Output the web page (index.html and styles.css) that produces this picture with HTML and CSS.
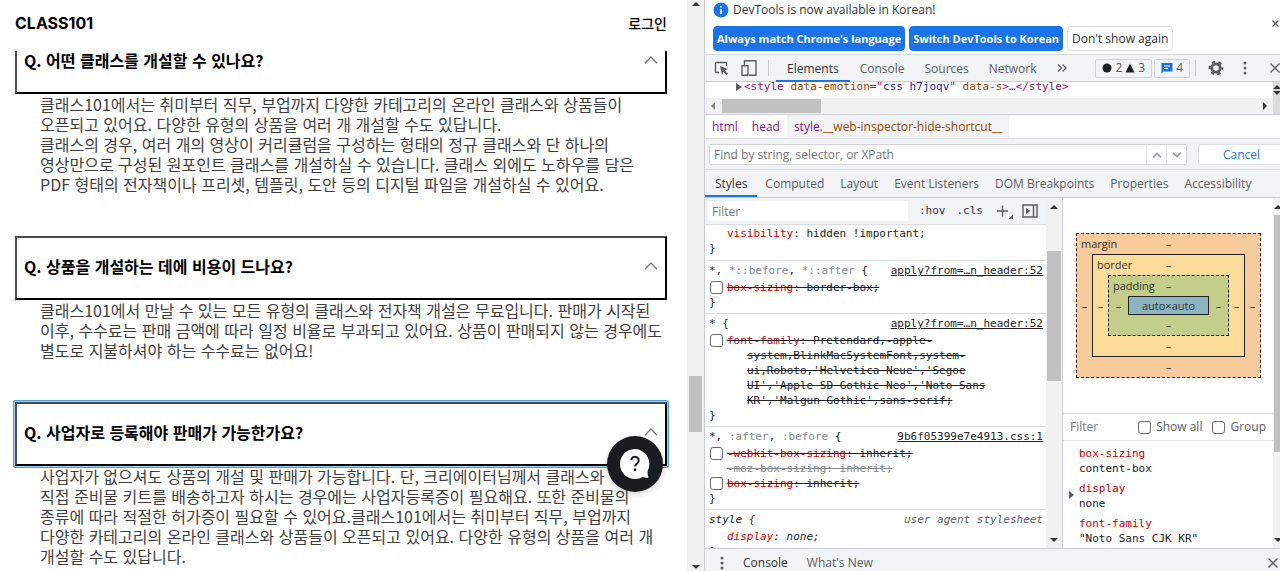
FILE: index.html
```html
<!DOCTYPE html>
<html lang="ko">
<head>
    <meta charset="UTF-8">
    <meta name="viewport" content="width=device-width, initial-scale=1.0">
    <title>CLASS101</title>
    <link rel="stylesheet" href="styles.css">
</head>
<body>

    <!-- Site -->
    <div class="site">
        <header class="site-header">
            <a class="logo" href="#">CLASS101</a>
            <a class="login" href="#">로그인</a>
        </header>

        <main class="faq">
            <div class="faq-list">
                <section class="faq-item">
                    <button class="question">Q. 어떤 클래스를 개설할 수 있나요?
                        <svg class="chevron" viewBox="0 0 14 8"><path d="M1 7.2 7 1l6 6.2"/></svg>
                    </button>
                    <p class="answer">클래스101에서는 취미부터 직무, 부업까지 다양한 카테고리의 온라인 클래스와 상품들이<br>오픈되고 있어요. 다양한 유형의 상품을 여러 개 개설할 수도 있답니다.<br>클래스의 경우, 여러 개의 영상이 커리큘럼을 구성하는 형태의 정규 클래스와 단 하나의<br>영상만으로 구성된 원포인트 클래스를 개설하실 수 있습니다. 클래스 외에도 노하우를 담은<br>PDF 형태의 전자책이나 프리셋, 템플릿, 도안 등의 디지털 파일을 개설하실 수 있어요.</p>
                </section>
                <section class="faq-item">
                    <button class="question">Q. 상품을 개설하는 데에 비용이 드나요?
                        <svg class="chevron" viewBox="0 0 14 8"><path d="M1 7.2 7 1l6 6.2"/></svg>
                    </button>
                    <p class="answer">클래스101에서 만날 수 있는 모든 유형의 클래스와 전자책 개설은 무료입니다. 판매가 시작된<br>이후, 수수료는 판매 금액에 따라 일정 비율로 부과되고 있어요. 상품이 판매되지 않는 경우에도<br>별도로 지불하셔야 하는 수수료는 없어요!</p>
                </section>
                <section class="faq-item">
                    <button class="question focused">Q. 사업자로 등록해야 판매가 가능한가요?
                        <svg class="chevron" viewBox="0 0 14 8"><path d="M1 7.2 7 1l6 6.2"/></svg>
                    </button>
                    <p class="answer">사업자가 없으셔도 상품의 개설 및 판매가 가능합니다. 단, 크리에이터님께서 클래스와<br>직접 준비물 키트를 배송하고자 하시는 경우에는 사업자등록증이 필요해요. 또한 준비물의<br>종류에 따라 적절한 허가증이 필요할 수 있어요.클래스101에서는 취미부터 직무, 부업까지<br>다양한 카테고리의 온라인 클래스와 상품들이 오픈되고 있어요. 다양한 유형의 상품을 여러 개<br>개설할 수도 있답니다.</p>
                </section>
            </div>
        </main>

        <button class="chat" aria-label="문의하기">
            <svg viewBox="0 0 30 30">
                <path class="bubble" d="M15 0a15 15 0 1 0 7.600 27.900c1.800.8 3.900 1 6 .6-.9-1.800-1.200-4-.9-6.600A15 15 0 0 0 15 0z"/>
                <path class="mark" d="M11.300 11.300a3.700 3.700 0 1 1 5.900 3.100c-1.500 1-2.200 1.600-2.200 3.200"/>
                <circle cx="15" cy="20.800" r="1.300"/>
            </svg>
        </button>
    </div>

    <div class="scroll site-scroll">
        <span class="arrow up"></span>
        <span class="thumb"></span>
        <span class="arrow down"></span>
    </div>

    <!-- DevTools -->
    <div class="devtools">
        <div class="infobar">
            <div class="infobar-text">
                <svg class="info" viewBox="0 0 16 16"><circle cx="8" cy="8" r="7.500" fill="#1a73e8"/><path d="M8 7v5M8 4v1.600" stroke="#fff" stroke-width="1.600"/></svg>
                <span>DevTools is now available in Korean!</span>
            </div>
            <div class="infobar-buttons">
                <button class="btn primary">Always match Chrome's language</button>
                <button class="btn primary">Switch DevTools to Korean</button>
                <button class="btn">Don't show again</button>
            </div>
            <button class="icon-btn infobar-close" aria-label="Close">
                <svg width="7" height="7" viewBox="0 0 7 7"><path d="M.5.500l6 6M6.500.500l-6 6"/></svg>
            </button>
        </div>

        <nav class="toolbar">
            <button class="icon-btn inspect" aria-label="Inspect">
                <svg width="16" height="16" viewBox="0 0 16 16"><path d="M5 12.500H2.500a1 1 0 0 1-1-1v-8a1 1 0 0 1 1-1h9a1 1 0 0 1 1 1V6"/><path class="fill" d="M6 6l8 3-3.200 1.500 3.200 3.200-1.300 1.300-3.200-3.200L8 15z"/></svg>
            </button>
            <button class="icon-btn device" aria-label="Device">
                <svg width="16" height="18" viewBox="0 0 16 18"><path d="M3.500 6V1.700h11.500v14.600H8M1 6.700h6v9.600H1z"/></svg>
            </button>
            <span class="divider"></span>
            <a class="tab active" href="#">Elements</a>
            <a class="tab" href="#">Console</a>
            <a class="tab" href="#">Sources</a>
            <a class="tab" href="#">Network</a>
            <button class="icon-btn more" aria-label="More tabs">
                <svg width="10" height="8" viewBox="0 0 10 8"><path d="M1 .500 4.500 4 1 7.500M5.500.500 9 4 5.500 7.500"/></svg>
            </button>
            <button class="counter">
                <svg width="10" height="10" viewBox="0 0 10 10"><circle cx="5" cy="5" r="4.500"/></svg>2
                <svg width="10" height="10" viewBox="0 0 10 10"><path d="M5 .500 9.500 9.500H.500z"/></svg>3
            </button>
            <button class="counter issues">
                <svg width="12" height="12" viewBox="0 0 12 12"><path fill="#1a73e8" d="M.500 1h11v8.500h-9L.500 11.500z"/><path d="M3 4h6M3 6.500h4" stroke="#fff"/></svg>4
            </button>
            <span class="divider"></span>
            <button class="icon-btn gear" aria-label="Settings">
                <svg width="16" height="16" viewBox="0 0 16 16"><circle cx="8" cy="8" r="4.200" stroke-width="2.800"/><circle cx="8" cy="8" r="6.300" stroke-width="2.200" stroke-dasharray="3.300 3.297" stroke-dashoffset="1.600"/></svg>
            </button>
            <button class="icon-btn dots" aria-label="Menu">
                <svg width="4" height="14" viewBox="0 0 4 14"><g class="fill"><circle cx="2" cy="2" r="1.500"/><circle cx="2" cy="7" r="1.500"/><circle cx="2" cy="12" r="1.500"/></g></svg>
            </button>
            <button class="icon-btn close" aria-label="Close DevTools">
                <svg width="10" height="10" viewBox="0 0 10 10"><path d="M.500.500l9 9M9.500.500l-9 9"/></svg>
            </button>
        </nav>

        <div class="dom">
            <div class="dom-line"><span class="tri"></span><code><span class="tag">&lt;style</span> <span class="attr">data-emotion</span><span class="tag">="</span><span class="val">css h7joqv</span><span class="tag">"</span> <span class="attr">data-s</span><span class="tag">&gt;</span>…<span class="tag">&lt;/style&gt;</span></code></div>
            <div class="dom-corner"><span class="arrow up"></span><span class="arrow down"></span></div>
            <div class="hscroll">
                <span class="arrow left"></span>
                <span class="hthumb"></span>
                <span class="arrow right"></span>
            </div>
        </div>

        <div class="crumbs">
            <a href="#">html</a>
            <a href="#">head</a>
            <a class="selected" href="#">style<span class="attr">.__web-inspector-hide-shortcut__</span></a>
        </div>

        <div class="search">
            <div class="search-box">
                <input type="text" aria-label="Find" placeholder="Find by string, selector, or XPath">
                <button aria-label="Previous"><svg width="10" height="6" viewBox="0 0 10 6"><path d="M1 5.500 5 1.500l4 4"/></svg></button>
                <button aria-label="Next"><svg width="10" height="6" viewBox="0 0 10 6"><path d="M1 .500 5 4.500l4-4"/></svg></button>
            </div>
            <button class="cancel">Cancel</button>
        </div>

        <nav class="subtabs">
            <a class="active" href="#">Styles</a>
            <a href="#">Computed</a>
            <a href="#">Layout</a>
            <a href="#">Event Listeners</a>
            <a href="#">DOM Breakpoints</a>
            <a href="#">Properties</a>
            <a href="#">Accessibility</a>
        </nav>

        <div class="panes">
            <div class="styles">
                <div class="filterbar">
                    <input type="text" aria-label="Filter styles" placeholder="Filter">
                    <button class="toggle">:hov</button>
                    <button class="toggle">.cls</button>
                    <button class="icon-btn plus" aria-label="New rule">
                        <svg width="18" height="18" viewBox="0 0 18 18"><path d="M1 9h11M6.500 3.500v11"/><path class="fill" d="M17 12.500V17h-4.500z"/></svg>
                    </button>
                    <button class="icon-btn" aria-label="Sidebar">
                        <svg width="16" height="14" viewBox="0 0 16 14"><path d="M1 1h14v12H1zM11.500 1v12"/><path class="fill" d="M4 4l4.500 3L4 10z"/></svg>
                    </button>
                </div>
                <div class="rules">
                    <div class="rule first">
                        <div class="decl"><b>visibility</b>: hidden !important;</div>
                        <div>}</div>
                    </div>
                    <div class="rule">
                        <div class="selector"><span>*, <i>*::before</i>, <i>*::after</i> {</span><a href="#">apply?from=…n_header:52</a></div>
                        <label class="decl"><input type="checkbox"><s><b>box-sizing</b>: border-box;</s></label>
                        <div>}</div>
                    </div>
                    <div class="rule">
                        <div class="selector"><span>* {</span><a href="#">apply?from=…n_header:52</a></div>
                        <label class="decl long"><input type="checkbox"><s><b>font-family</b>: Pretendard,-apple-<br>system,BlinkMacSystemFont,system-<br>ui,Roboto,'Helvetica Neue','Segoe<br>UI','Apple SD Gothic Neo','Noto Sans<br>KR','Malgun Gothic',sans-serif;</s></label>
                        <div>}</div>
                    </div>
                    <div class="rule">
                        <div class="selector"><span>*, <i>:after</i>, <i>:before</i> {</span><a href="#">9b6f05399e7e4913.css:1</a></div>
                        <label class="decl"><input type="checkbox"><s><b>-webkit-box-sizing</b>: inherit;</s></label>
                        <div class="decl muted"><s>-moz-box-sizing: inherit;</s></div>
                        <label class="decl"><input type="checkbox"><s><b>box-sizing</b>: inherit;</s></label>
                        <div>}</div>
                    </div>
                    <div class="rule agent">
                        <div class="selector"><span>style {</span><span class="origin">user agent stylesheet</span></div>
                        <div class="decl"><b>display</b>: none;</div>
                        <div>}</div>
                    </div>
                </div>
            </div>
            <div class="scroll styles-scroll">
                <span class="arrow up"></span>
                <span class="thumb"></span>
                <span class="arrow down"></span>
            </div>

            <div class="side">
                <div class="model">
                    <div class="ring margin">
                        <span class="name">margin</span><span class="t">–</span><span class="l">–</span>
                        <div class="ring border">
                            <span class="name">border</span><span class="t">–</span><span class="l">–</span>
                            <div class="ring padding">
                                <span class="name">padding</span><span class="t">–</span><span class="l">–</span>
                                <div class="content">auto×auto</div>
                                <span class="r">–</span><span class="b">–</span>
                            </div>
                            <span class="r">–</span><span class="b">–</span>
                        </div>
                        <span class="r">–</span><span class="b">–</span>
                    </div>
                </div>
                <div class="computed-filter">
                    <input type="text" aria-label="Filter computed" placeholder="Filter">
                    <label><input type="checkbox">Show all</label>
                    <label><input type="checkbox">Group</label>
                </div>
                <dl class="computed">
                    <div><dt>box-sizing</dt><dd>content-box</dd></div>
                    <div class="expandable"><dt>display</dt><dd>none</dd></div>
                    <div><dt>font-family</dt><dd>"Noto Sans CJK KR"</dd></div>
                </dl>
            </div>
            <div class="scroll side-scroll">
                <span class="arrow up"></span>
                <span class="thumb"></span>
                <span class="arrow down"></span>
            </div>
        </div>

        <div class="drawer">
            <button class="icon-btn" aria-label="Drawer menu">
                <svg width="4" height="14" viewBox="0 0 4 14"><g class="fill"><circle cx="2" cy="2" r="1.500"/><circle cx="2" cy="7" r="1.500"/><circle cx="2" cy="12" r="1.500"/></g></svg>
            </button>
            <a class="active" href="#">Console</a>
            <a href="#">What's New</a>
            <button class="icon-btn close" aria-label="Close drawer">
                <svg width="10" height="10" viewBox="0 0 10 10"><path d="M.500.500l9 9M9.500.500l-9 9"/></svg>
            </button>
        </div>
    </div>

</body>
</html>
```
FILE: styles.css
```css
/* Reset default styles */
* {
    margin: 0;
    padding: 0;
    box-sizing: border-box;
}

body {
    display: flex;
    height: 100vh;
    overflow: hidden;
    background-color: #fff;
    font-family: "Noto Sans CJK KR", sans-serif;
}

a {
    color: inherit;
    text-decoration: none;
}

button {
    background: none;
    border: none;
    font: inherit;
    color: inherit;
    cursor: pointer;
}

input {
    font: inherit;
    border: none;
    outline: none;
}

svg {
    display: block;
    flex: none;
}

code {
    font: inherit;
}

/* Site */
.site {
    position: relative;
    flex: 1;
    min-width: 0;
    display: flex;
    flex-direction: column;
}

.site-header {
    display: flex;
    justify-content: space-between;
    align-items: center;
    height: 51px;
    padding: 0 20px 5px 15px;
    flex: none;
}

.logo {
    font-family: Inter, sans-serif;
    font-size: 16px;
    font-weight: 700;
    color: #000;
}

.login {
    font-size: 14px;
    font-weight: 500;
}

.faq {
    flex: 1;
    min-height: 0;
    overflow: hidden;
    padding: 0 20px 0 15px;
}

/* first question is scrolled partly under the header */
.faq-list {
    margin-top: -21px;
}

.question {
    display: flex;
    align-items: center;
    justify-content: space-between;
    width: 100%;
    height: 64px;
    padding: 0 7px 4px;
    border: 2px solid;
    border-color: #4c4c4c #000 #000 #4c4c4c;
    background-color: #fff;
    color: #000;
    font-size: 16px;
    font-weight: 700;
    text-align: left;
}

.question.focused {
    border-radius: 1px;
    box-shadow: 0 0 0 1px #a8d4f0, 0 0 0 2px #4a9fd4;
}

.chevron {
    width: 14px;
    height: 8px;
    fill: none;
    stroke: #777;
    stroke-width: 1.300;
}

.answer {
    padding-left: 25px;
    margin-bottom: 42px;
    color: #3e3e3e;
    font-size: 16px;
    line-height: 20px;
    white-space: nowrap;
}

.chat {
    position: absolute;
    right: 24px;
    bottom: 79px;
    width: 56px;
    height: 56px;
    border-radius: 50%;
    background-color: #1a1c1f;
    box-shadow: 0 2px 6px rgba(0, 0, 0, 0.2);
}

.chat svg {
    width: 30px;
    margin: 0 auto;
}

.chat .bubble {
    fill: #fff;
}

.chat .mark {
    fill: none;
    stroke: #1a1c1f;
    stroke-width: 2;
}

/* Scrollbars */
.scroll {
    display: grid;
    flex: none;
    justify-items: center;
    background-color: #f1f1f1;
}

.thumb {
    width: 100%;
    background-color: #c1c1c1;
}

.arrow {
    border: 4px solid transparent;
    width: 8px;
    height: 8px;
}

.arrow.up {
    border-top: none;
    border-bottom-color: #333;
    height: 4px;
}

.arrow.down {
    border-bottom: none;
    border-top-color: #333;
    height: 4px;
    align-self: end;
}

.arrow.left {
    border-left: none;
    border-right-color: #888;
    width: 4px;
}

.arrow.right {
    border-right: none;
    border-left-color: #333;
    width: 4px;
}

.site-scroll {
    width: 17px;
    padding: 2px;
    grid-template-rows: 374fr 56px 137fr;
}

/* DevTools */
.devtools {
    width: 45%;
    flex: none;
    display: flex;
    flex-direction: column;
    border-left: 1px solid #cacdd1;
    overflow: hidden;
    background-color: #fff;
    color: #303236;
    font-family: "Open Sans", sans-serif;
    font-size: 12px;
    line-height: 16px;
}

.icon-btn svg {
    fill: none;
    stroke: #5a5e62;
    stroke-width: 1.400;
}

.icon-btn .fill {
    fill: #5a5e62;
    stroke: none;
}

.infobar {
    position: relative;
    display: flex;
    flex-direction: column;
    gap: 8px;
    height: 54px;
    padding: 2px 8px;
    flex: none;
}

.infobar-text {
    display: flex;
    align-items: center;
    gap: 4px;
}

.info {
    width: 16px;
    height: 16px;
}

.infobar-buttons {
    display: flex;
    gap: 4px;
}

.btn {
    height: 25px;
    padding: 0 4px;
    border: 1px solid #dfe1e5;
    border-radius: 4px;
    white-space: nowrap;
}

.btn.primary {
    padding: 0 3px;
    border-color: #1a73e8;
    background-color: #1a73e8;
    color: #fff;
    font-size: 11px;
    font-weight: 700;
}

.infobar-close {
    position: absolute;
    right: 1px;
    top: 20px;
}

.toolbar {
    display: flex;
    align-items: center;
    height: 28px;
    flex: none;
    border-top: 1px solid #d5d8db;
    border-bottom: 1px solid #cacdd1;
    background-color: #f1f3f4;
    color: #5a5e62;
}

.inspect {
    margin-left: 9px;
}

.device {
    margin-left: 11px;
}

.divider {
    width: 1px;
    height: 16px;
    margin: 0 7px 0 11px;
    background-color: #c8cbd0;
}

.tab {
    height: 27px;
    padding: 0 10px;
    line-height: 27px;
}

.tab.active {
    padding: 0 11px;
    border-bottom: 2px solid #1a73e8;
    color: #303236;
}

.more {
    margin: 0 auto 0 10px;
}

.counter {
    display: flex;
    align-items: center;
    gap: 3px;
    height: 19px;
    padding: 0 6px;
    border: 1px solid #d0d3d7;
    border-radius: 2px;
    color: #5a5e62;
}

.counter svg {
    fill: #202124;
}

.issues {
    margin-left: 2px;
}

.counter + .divider {
    margin: 0 12px 0 5px;
}

.dots {
    margin-left: 19px;
}

.toolbar .close {
    margin: 0 0 0 23px;
}

.dom {
    display: grid;
    grid-template-columns: 1fr 7px;
    grid-template-rows: 16px 16px;
    flex: none;
    overflow: hidden;
    border-bottom: 1px solid #cacdd1;
}

.dom-line {
    display: flex;
    align-items: center;
    height: 9px;
    padding-left: 31px;
    font: 11px/15px "DejaVu Sans Mono", monospace;
    white-space: pre;
}

.tri {
    border: 4px solid transparent;
    border-left: 6px solid #5a5e62;
    border-right: none;
    margin-right: 2px;
}

.tag,
.crumbs {
    color: #881280;
}

.attr {
    color: #994500;
}

.val {
    color: #1a1aa6;
}

.dom-corner {
    grid-column: 2;
    grid-row: 1 / 3;
    background-color: #dcdcdc;
    padding-top: 3px;
}

.dom-corner .down {
    display: block;
    margin-top: 2px;
}

.dom-corner .up {
    display: block;
}

.hscroll {
    display: flex;
    align-items: center;
    padding: 0 6px;
    background-color: #f1f1f1;
}

.hthumb {
    width: 99px;
    height: 14px;
    margin: 0 auto 0 7px;
    background-color: #c1c1c1;
}

.crumbs {
    display: flex;
    height: 24px;
    flex: none;
    border-bottom: 1px solid #dfe1e5;
    line-height: 24px;
}

.crumbs a {
    padding: 0 7px;
}

.crumbs .selected {
    background-color: #f1f3f4;
}

.search {
    display: flex;
    gap: 11px;
    height: 31px;
    padding: 5px 0 4px 4px;
    flex: none;
    border-bottom: 1px solid #dadce0;
    background-color: #f1f3f4;
}

.search-box {
    display: flex;
    flex: 1;
    border: 1px solid #d0d3d7;
    border-radius: 2px;
    background-color: #fff;
}

.search-box input {
    flex: 1;
    min-width: 0;
    padding-left: 4px;
}

.search-box button {
    width: 20px;
    padding-left: 5px;
    border-left: 1px solid #e3e5e8;
}

.search-box svg {
    fill: none;
    stroke: #a0a3a7;
    stroke-width: 1.800;
}

.cancel {
    width: 82px;
    padding-left: 4px;
    border: 1px solid #dfe1e5;
    border-right: none;
    border-radius: 4px 0 0 4px;
    background-color: #fff;
    color: #1a73e8;
}

::placeholder {
    color: #757575;
    opacity: 1;
}

.subtabs {
    display: flex;
    height: 28px;
    flex: none;
    border-bottom: 1px solid #cacdd1;
    background-color: #f1f3f4;
    color: #5a5e62;
    line-height: 28px;
    white-space: nowrap;
}

.subtabs a {
    padding: 0 8px;
}

.subtabs .active {
    padding: 0 10px;
    border-bottom: 2px solid #1a73e8;
    color: #303236;
}

.panes {
    display: flex;
    flex: 1;
    min-height: 0;
}

.styles {
    display: flex;
    flex-direction: column;
    flex: 1;
    min-width: 0;
}

.filterbar {
    display: flex;
    align-items: center;
    gap: 11px;
    height: 27px;
    padding: 0 8px 0 3px;
    flex: none;
    border-bottom: 1px solid #dadce0;
    background-color: #f1f3f4;
}

.filterbar input {
    flex: 1;
    min-width: 0;
    height: 20px;
    padding-left: 4px;
    background-color: #fff;
}

.toggle {
    font: 11px/16px "DejaVu Sans Mono", monospace;
}

.plus {
    margin: 0 -3px 0 2px;
}

.rules,
.computed {
    overflow: hidden;
    font: 11px/15px "DejaVu Sans Mono", monospace;
    color: #202124;
}

.rules {
    padding-top: 1px;
}

.rule {
    padding: 0 3px 3px 4px;
    border-bottom: 1px solid #dadce0;
    white-space: nowrap;
}

.rule.first {
    padding-bottom: 4px;
}

.selector {
    display: flex;
    justify-content: space-between;
    height: 19px;
    line-height: 19px;
}

.selector a {
    text-decoration: underline;
}

.selector i,
.muted {
    color: #80868b;
    font-style: normal;
}

.decl {
    display: block;
    padding-left: 18px;
}

.decl input {
    float: left;
    margin: 1px 0 0 -17px;
}

.decl b {
    color: #c80000;
    font-weight: 400;
}

.decl.long {
    padding-left: 38px;
    text-indent: -20px;
}

.decl.long input {
    margin-left: -37px;
}

.agent {
    font-style: italic;
}

.origin {
    color: #5a5e62;
}

input[type="checkbox"] {
    appearance: none;
    width: 13px;
    height: 13px;
    flex: none;
    border: 1px solid #6b6b6b;
    border-radius: 3px;
    background-color: #fff;
}

.styles-scroll {
    width: 16px;
    padding: 7px 1px 6px;
    grid-template-rows: 46fr 130px 162fr;
}

.side {
    width: 211px;
    flex: none;
    border-left: 1px solid #cacdd1;
    overflow: hidden;
}

.side-scroll {
    width: 7px;
    padding: 7px 0 6px 1px;
    grid-template-rows: 10px 237px 1fr;
    overflow: hidden;
}

/* Box model */
.model {
    height: 216px;
    padding: 35px 12px 0 13px;
    border-bottom: 1px solid #dadce0;
    font-size: 11px;
}

.ring {
    display: grid;
    grid-template-columns: 15px 1fr 15px;
    grid-template-rows: 20px 1fr 20px;
    align-items: center;
    justify-items: center;
    border: 1px dashed #202124;
    background-color: #f8cb9c;
}

.margin {
    height: 145px;
}

.ring.border {
    border-style: solid;
    background-color: #fddc9a;
}

.ring.padding {
    grid-template-columns: 19px 1fr 19px;
    background-color: #c2ce89;
}

.ring > div {
    grid-area: 2 / 2;
    width: 100%;
    height: 100%;
}

.name {
    grid-area: 1 / 1 / 2 / 4;
    justify-self: start;
    padding-left: 4px;
}

.t {
    grid-area: 1 / 2;
}

.l {
    grid-area: 2 / 1;
}

.r {
    grid-area: 2 / 3;
}

.b {
    grid-area: 3 / 2;
}

.content {
    display: flex;
    align-items: center;
    justify-content: center;
    border: 1px solid #202124;
    background-color: #8cb5c0;
}

.computed-filter {
    display: flex;
    align-items: center;
    gap: 10px;
    height: 27px;
    padding: 0 7px;
    border-bottom: 1px solid #e3e5e8;
    color: #5a5e62;
    white-space: nowrap;
}

.computed-filter input[type="text"] {
    flex: 1;
    min-width: 0;
}

.computed-filter label {
    display: flex;
    align-items: center;
    gap: 5px;
}

.computed {
    padding: 5px 0 0 16px;
    white-space: nowrap;
}

.computed div {
    margin-bottom: 5px;
}

.computed dt {
    color: #c80000;
}

.expandable {
    position: relative;
}

.expandable::before {
    content: "";
    position: absolute;
    left: -10px;
    top: 10px;
    border: 4px solid transparent;
    border-left: 5px solid #5a5e62;
    border-right: none;
}

.drawer {
    display: flex;
    align-items: center;
    gap: 19px;
    height: 23px;
    padding: 5px 2px 0 15px;
    flex: none;
    border-top: 1px solid #cacdd1;
    background-color: #f1f3f4;
    color: #5a5e62;
}

.drawer .active {
    color: #303236;
}

.drawer .close {
    margin-left: auto;
}
```
